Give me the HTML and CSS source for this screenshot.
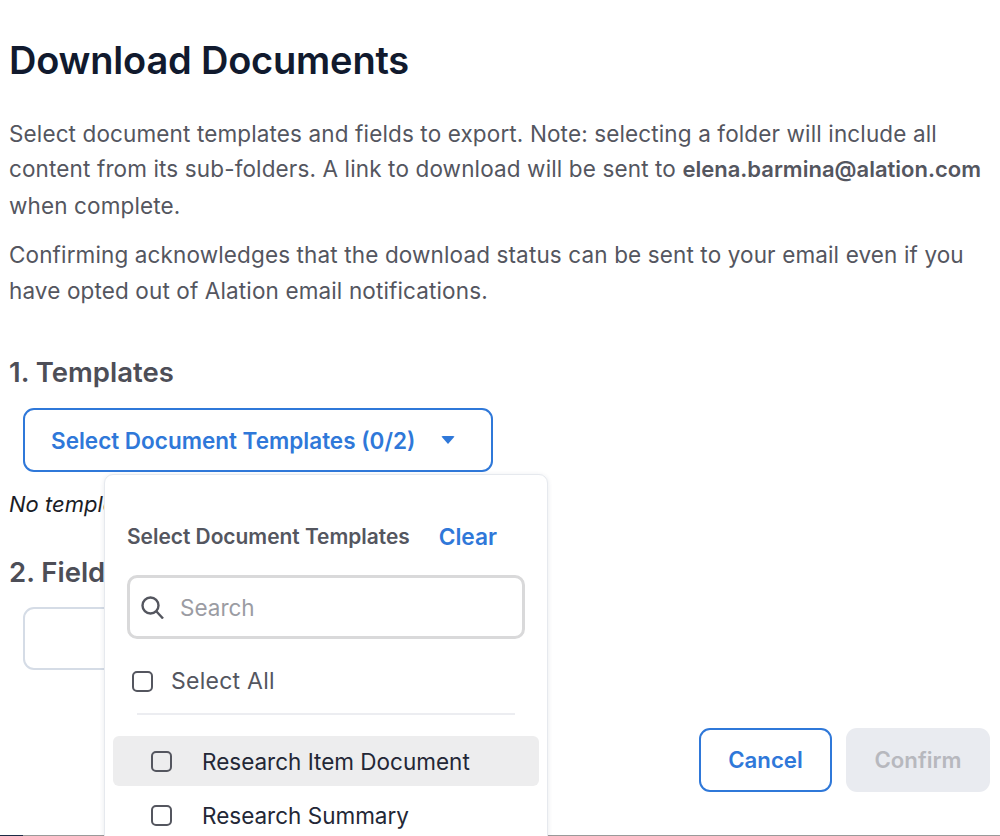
FILE: index.html
```html
<!DOCTYPE html>
<html lang="en">
<head>
<meta charset="utf-8">
<title>Download Documents</title>
<link rel="stylesheet" href="styles.css">
</head>
<body>
<main class="page">
  <h1 class="title">Download Documents</h1>
  <p class="para para-first">Select document templates and fields to export. Note: selecting a folder will include all content from its sub-folders. A link to download will be sent to <strong>elena.barmina@alation.com</strong> when complete.</p>
  <p class="para para-second">Confirming acknowledges that the download status can be sent to your email even if you have opted out of Alation email notifications.</p>
  <h2 class="section">1. Templates</h2>
  <div class="picker">
    <button class="select-btn">Select Document Templates (0/2)<span class="caret"></span></button>
    <div class="popover">
      <div class="pop-head"><span class="pop-title">Select Document Templates</span><span class="clear">Clear</span></div>
      <div class="search">
        <svg class="search-icon" viewBox="0 0 24 24" width="24" height="24"><circle cx="10.5" cy="10.5" r="8"/><path d="M16.5 16.5l6.5 7"/></svg>
        <span class="search-text">Search</span>
      </div>
      <label class="all"><span class="box"></span>Select All</label>
      <div class="divider"></div>
      <div class="item item-hover"><span class="box"></span>Research Item Document</div>
      <div class="item"><span class="box"></span>Research Summary</div>
    </div>
  </div>
  <p class="empty">No templates selected</p>
  <h2 class="section section-two">2. Fields</h2>
  <button class="select-btn select-off"></button>
  <div class="actions">
    <button class="btn btn-cancel">Cancel</button>
    <button class="btn btn-confirm">Confirm</button>
  </div>
</main>
<div class="edge"><span class="edge-dark"></span></div>
</body>
</html>
```
FILE: styles.css
```css
* { box-sizing: border-box; }
html, body { margin: 0; height: 836px; overflow: hidden; background: #fff; }
body { font-family: "Inter", "Liberation Sans", sans-serif; position: relative; }
.page { padding: 36px 10px 0 9px; }
.title { margin: 0; font-size: 38px; line-height: 48px; font-weight: 600; color: #111a2e; letter-spacing: -0.2px; }
.para { margin: 0; font-size: 22.5px; letter-spacing: 0.13px; line-height: 35.4px; color: #54565f; }
.para strong { font-size: 22px; letter-spacing: 0; font-weight: 600; }
.para-first { margin-top: 32px; }
.para-second { margin-top: 14px; }
.section { margin: 46px 0 0; font-size: 27.5px; line-height: 36px; font-weight: 600; color: #4d4e57; }
.section-two { margin-top: 34px; }
.picker { position: relative; margin: 18px 0 0 14px; width: 470px; }
.select-btn { display: flex; align-items: center; width: 470px; height: 64px; padding: 0 26px; border: 2px solid #2f78d9; border-radius: 11px; background: #fff; font: 600 22.5px "Inter", sans-serif; color: #2f78d9; }
.select-off { height: 63px; margin: 17px 0 0 14px; border-color: #d5dce6; }
.caret { margin-left: 26px; width: 0; height: 0; border-left: 7px solid transparent; border-right: 7px solid transparent; border-top: 8px solid #2f78d9; border-radius: 2px; }
.popover { position: absolute; left: 81px; top: 66px; width: 444px; height: 400px; padding: 43px 8px 0; background: #fff; border: 1px solid #e6e9ee; border-radius: 9px; box-shadow: 0 1px 5px rgba(30, 50, 80, .1); z-index: 2; }
.pop-head { display: flex; align-items: center; justify-content: space-between; height: 36px; padding: 0 42px 0 14px; }
.pop-title { font-size: 20.9px; font-weight: 600; color: #54565f; }
.clear { font-size: 22.7px; font-weight: 600; color: #2f78d9; }
.search { display: flex; align-items: center; gap: 16px; margin: 21px 14px 0; width: 398px; height: 64px; padding: 0 10px; border: 3px solid #d9d9da; border-radius: 10px; }
.search-icon { fill: none; stroke: #54565f; stroke-width: 2.4; flex: none; }
.search-text { font-size: 22.5px; color: #9b9ca3; }
.box { flex: none; width: 21px; height: 21px; border: 2.5px solid #54565f; border-radius: 5px; }
.all { display: flex; align-items: center; gap: 18px; margin: 22px 0 0 19px; height: 40px; font-size: 23px; letter-spacing: 0.25px; color: #54565f; }
.divider { height: 2px; margin: 12px 24px 0 24px; background: #ecedf1; }
.item { display: flex; align-items: center; gap: 30px; height: 50px; padding: 0 38px; border-radius: 6px; font-size: 22.5px; color: #232736; }
.item-hover { margin-top: 21px; background: #ededee; }
.item + .item { margin-top: 4px; }
.empty { margin: 16px 0 0; font-size: 22px; line-height: 32px; font-style: italic; color: #1b1d26; }
.actions { position: absolute; right: 10px; top: 728px; display: flex; gap: 14px; }
.btn { height: 64px; border-radius: 11px; padding: 0 0 2px; font: 600 22.2px "Inter", sans-serif; }
.btn-cancel { width: 133px; border: 2px solid #2f78d9; background: #fff; color: #2f78d9; }
.btn-confirm { width: 144px; border: 0; background: #e9ebf0; color: #b7b8be; }
.edge { position: absolute; left: 0; right: 0; bottom: 0; height: 1px; background: #9a9a9a; }
.edge-dark { display: block; width: 23px; height: 1px; background: #1c2b45; }
```
